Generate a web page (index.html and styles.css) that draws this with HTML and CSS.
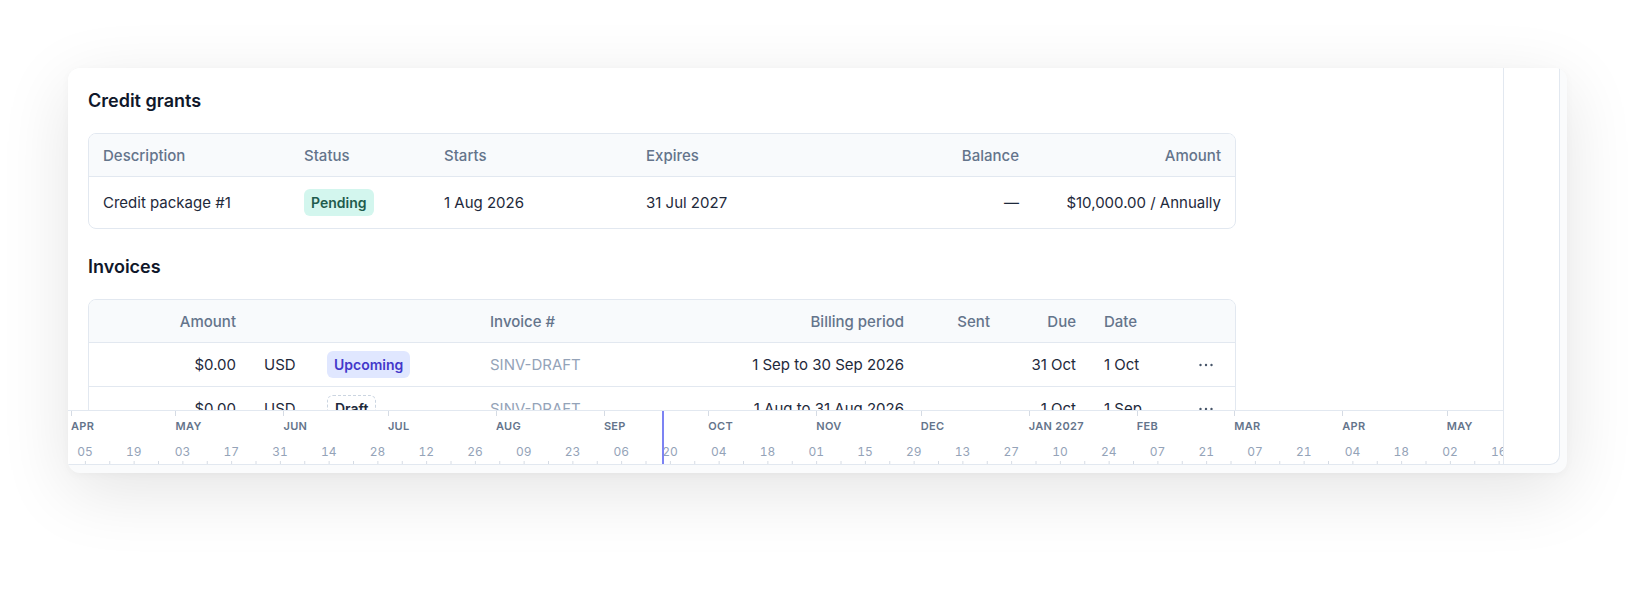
FILE: index.html
```html
<!DOCTYPE html>
<html lang="en">
<head>
    <meta charset="UTF-8">
    <meta name="viewport" content="width=device-width, initial-scale=1.0">
    <title>Billing</title>
    <link rel="stylesheet" href="styles.css">
</head>
<body>
    <div class="stage">
        <div class="frame">
            <div class="panel">
                <div class="main">
                    <div class="scroll">
                        <h2 class="section-title">Credit grants</h2>
                        <div class="table grants">
                            <div class="row head">
                                <div class="cell">Description</div>
                                <div class="cell">Status</div>
                                <div class="cell">Starts</div>
                                <div class="cell">Expires</div>
                                <div class="cell right">Balance</div>
                                <div class="cell right">Amount</div>
                            </div>
                            <div class="row">
                                <div class="cell">Credit package #1</div>
                                <div class="cell"><span class="badge pending">Pending</span></div>
                                <div class="cell">1 Aug 2026</div>
                                <div class="cell">31 Jul 2027</div>
                                <div class="cell right">—</div>
                                <div class="cell right">$10,000.00 / Annually</div>
                            </div>
                        </div>

                        <h2 class="section-title invoices-title">Invoices</h2>
                        <div class="table invoices">
                            <div class="row head">
                                <div class="cell right">Amount</div>
                                <div class="cell"></div>
                                <div class="cell"></div>
                                <div class="cell">Invoice #</div>
                                <div class="cell right">Billing period</div>
                                <div class="cell right">Sent</div>
                                <div class="cell right">Due</div>
                                <div class="cell">Date</div>
                                <div class="cell"></div>
                            </div>
                            <div class="row">
                                <div class="cell right">$0.00</div>
                                <div class="cell">USD</div>
                                <div class="cell"><span class="badge upcoming">Upcoming</span></div>
                                <div class="cell muted">SINV-DRAFT</div>
                                <div class="cell right">1 Sep to 30 Sep 2026</div>
                                <div class="cell right"></div>
                                <div class="cell right">31 Oct</div>
                                <div class="cell">1 Oct</div>
                                <div class="cell center">
                                    <svg class="dots" width="16" height="4" viewBox="0 0 16 4"><circle cx="2.5" cy="2" r="1.2"/><circle cx="8" cy="2" r="1.2"/><circle cx="13.5" cy="2" r="1.2"/></svg>
                                </div>
                            </div>
                            <div class="row">
                                <div class="cell right">$0.00</div>
                                <div class="cell">USD</div>
                                <div class="cell"><span class="badge draft">Draft</span></div>
                                <div class="cell muted">SINV-DRAFT</div>
                                <div class="cell right">1 Aug to 31 Aug 2026</div>
                                <div class="cell right"></div>
                                <div class="cell right">1 Oct</div>
                                <div class="cell">1 Sep</div>
                                <div class="cell center">
                                    <svg class="dots" width="16" height="4" viewBox="0 0 16 4"><circle cx="2.5" cy="2" r="1.2"/><circle cx="8" cy="2" r="1.2"/><circle cx="13.5" cy="2" r="1.2"/></svg>
                                </div>
                            </div>
                        </div>
                    </div>

                    <div class="timeline">
                        <div class="months">
                            <div class="month m30">APR</div>
                            <div class="month m31">MAY</div>
                            <div class="month m30">JUN</div>
                            <div class="month m31">JUL</div>
                            <div class="month m31">AUG</div>
                            <div class="month m30">SEP</div>
                            <div class="month m31">OCT</div>
                            <div class="month m30">NOV</div>
                            <div class="month m31">DEC</div>
                            <div class="month m31">JAN 2027</div>
                            <div class="month m28">FEB</div>
                            <div class="month m31">MAR</div>
                            <div class="month m30">APR</div>
                            <div class="month m31">MAY</div>
                        </div>
                        <div class="days">
                            <span>05</span><span>19</span><span>03</span><span>17</span><span>31</span>
                            <span>14</span><span>28</span><span>12</span><span>26</span><span>09</span>
                            <span>23</span><span>06</span><span>20</span><span>04</span><span>18</span>
                            <span>01</span><span>15</span><span>29</span><span>13</span><span>27</span>
                            <span>10</span><span>24</span><span>07</span><span>21</span><span>07</span>
                            <span>21</span><span>04</span><span>18</span><span>02</span><span>16</span>
                        </div>
                        <div class="today"></div>
                    </div>
                </div>
                <div class="side"></div>
            </div>
        </div>
    </div>
</body>
</html>
```

FILE: styles.css
```css
body {
    margin: 0;
    background: #ffffff;
    font-family: Inter, "Noto Sans", sans-serif;
    color: #1e293b;
    overflow: hidden;
}

.stage {
    height: 593px;
    box-sizing: border-box;
    padding: 68px 0 0 68px;
}

.frame {
    width: 1499px;
    height: 405px;
    border-radius: 12px;
    background: #fafbfc;
    overflow: hidden;
    box-shadow: 0 18px 70px rgba(0, 0, 0, 0.11), 0 2px 8px rgba(0, 0, 0, 0.03);
}

.panel {
    display: flex;
    width: 1492px;
    height: 397px;
    box-sizing: border-box;
    background: #fff;
    border-right: 1px solid #e2e8f0;
    border-bottom: 1px solid #e2e8f0;
    border-bottom-right-radius: 10px;
    overflow: hidden;
}

.main {
    display: flex;
    flex-direction: column;
    width: 1436px;
    box-sizing: border-box;
    border-right: 1px solid #e2e8f0;
    overflow: hidden;
}

.side {
    flex: 1;
}

.scroll {
    height: 342px;
    flex: none;
    padding: 21px 20px 0;
    box-sizing: border-box;
    overflow: hidden;
}

.section-title {
    margin: 0;
    font-size: 18px;
    line-height: 24px;
    font-weight: 600;
    color: #0f172a;
}

.invoices-title {
    margin-top: 26px;
}

/* tables */
.table {
    width: 1148px;
    margin-top: 20px;
    border: 1px solid #e2e8f0;
    border-radius: 8px;
    box-sizing: border-box;
    overflow: hidden;
}

.row {
    display: grid;
    align-items: center;
    border-top: 1px solid #e2e8f0;
    font-size: 15px;
}

.row.head {
    border-top: none;
    height: 42px;
    background: #f8fafc;
    color: #64748b;
    font-weight: 500;
}

.grants .row {
    grid-template-columns: 201px 140px 202px 267px 134px 202px;
}

.grants .row:not(.head) {
    height: 51px;
}

.invoices .row {
    grid-template-columns: 161px 63px 163px 224px 218px 86px 86px 86px 59px;
}

.invoices .row:not(.head) {
    height: 43px;
}

.cell {
    padding: 0 14px;
    white-space: nowrap;
}

.cell.right {
    text-align: right;
}

.cell.center {
    display: flex;
    justify-content: center;
}

.cell.muted {
    color: #94a3b8;
}

.dots {
    fill: #475569;
}

.badge {
    display: inline-block;
    height: 27px;
    line-height: 27px;
    padding: 0 7px;
    border-radius: 6px;
    font-size: 14px;
    font-weight: 600;
    box-sizing: border-box;
}

.badge.pending {
    background: #d3f6ee;
    color: #1f5c4d;
}

.badge.upcoming {
    background: #e0e7ff;
    color: #4338ca;
}

.badge.draft {
    line-height: 25px;
    border: 1px dashed #cbd5e1;
    color: #1e293b;
}

/* timeline axis */
.timeline {
    position: relative;
    flex: none;
    height: 54px;
    border-top: 1px solid #e2e8f0;
    background-color: #fff;
    background-image: linear-gradient(to right, #d5dbe4 0 1px, transparent 1px);
    background-size: 24.381px 4px;
    background-position: 16.9px 100%;
    background-repeat: repeat-x;
}

.months {
    display: flex;
    height: 30px;
    margin-left: 3px;
}

.month {
    position: relative;
    flex: none;
    line-height: 30px;
    font-size: 11px;
    font-weight: 600;
    letter-spacing: 0.3px;
    color: #64748b;
    white-space: nowrap;
}

.month::before {
    content: "";
    position: absolute;
    left: 0;
    top: 0;
    width: 1px;
    height: 5px;
    background: #d5dbe4;
}

.m28 { width: 97.52px; }
.m30 { width: 104.49px; }
.m31 { width: 107.97px; }

.days {
    display: flex;
    height: 23px;
    margin-left: -7.48px;
}

.days span {
    flex: none;
    width: 48.762px;
    text-align: center;
    line-height: 22px;
    font-size: 12px;
    color: #94a3b8;
    font-variant-numeric: tabular-nums;
}

.today {
    position: absolute;
    left: 594px;
    top: 0;
    bottom: 0;
    width: 2px;
    background: #7c83f3;
}
```
